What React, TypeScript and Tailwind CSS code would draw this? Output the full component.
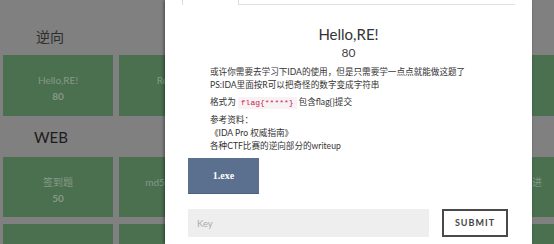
import React from "react";

const font = { fontFamily: 'Lato, "Noto Sans CJK SC", sans-serif' };

type Card = { title: string; score: string };

const row1: Card[] = [
  { title: "Hello,RE!", score: "80" },
  { title: "Reverse", score: "100" },
  { title: "逆向入门", score: "100" },
  { title: "CrackMe", score: "150" },
  { title: "加密", score: "200" },
];
const row2: Card[] = [
  { title: "签到题", score: "50" },
  { title: "md5 collision", score: "50" },
  { title: "GBK Injection", score: "150" },
  { title: "文件包含", score: "150" },
  { title: "步步前进", score: "100" },
];
const row3: Card[] = [
  { title: "", score: "" },
  { title: "", score: "" },
  { title: "", score: "" },
  { title: "", score: "" },
  { title: "", score: "" },
];

function CardRow({ cards, h }: { cards: Card[]; h: string }) {
  return (
    <div className="flex gap-[6px] pl-[3px]">
      {cards.map((c, i) => (
        <div
          key={i}
          className={`w-[110px] shrink-0 ${h} bg-[#4a7050] flex flex-col items-center pt-[17px] text-[10px] leading-[16px] text-[#879887]`}
        >
          <div className="whitespace-nowrap">{c.title}</div>
          <div className="font-bold">{c.score}</div>
        </div>
      ))}
    </div>
  );
}

export default function App() {
  return (
    <div
      className="relative w-[554px] h-[244px] overflow-hidden bg-[#808080]"
      style={font}
    >
      {/* background page */}
      <div className="flex flex-col pt-[27px]">
        <div className="pl-[36px] text-[14px] leading-[20px] text-[#2e2e2e]">逆向</div>
        <div className="mt-[8px]">
          <CardRow cards={row1} h="h-[61px]" />
        </div>
        <div className="mt-[11px] pl-[34px] text-[15px] leading-[20px] text-[#1c1c1c]">WEB</div>
        <div className="mt-[10px] flex flex-col gap-[7px]">
          <CardRow cards={row2} h="h-[60px]" />
          <CardRow cards={row3} h="h-[60px]" />
        </div>
      </div>

      {/* modal */}
      <div className="absolute left-[165px] top-0 w-[367px] h-[244px] bg-white shadow-[-1px_0_3px_rgba(0,0,0,0.45)] px-[17px] flex flex-col text-[#333]">
        <div className="flex h-[5px] shrink-0">
          <div className="w-[57px] h-full border-x border-[#dddddd] bg-white" />
          <div className="flex-1 border-b border-[#e2e2e2]" />
        </div>
        <div className="mt-[20px] text-center text-[15px] leading-[18px] text-[#333]">
          Hello,RE!
        </div>
        <div className="mt-[2px] text-center text-[12px] leading-[16px] text-[#444]">
          80
        </div>
        <div className="pl-[28px] text-[8.6px] leading-[13px] text-[#333]">
          <div className="mt-[5px]">
            <div>或许你需要去学习下IDA的使用，但是只需要学一点点就能做这题了</div>
            <div>PS:IDA里面按R可以把奇怪的数字变成字符串</div>
          </div>
          <div className="mt-[4px] flex items-center">
            <span>格式为</span>
            <code
              className="mx-[2px] px-[3px] bg-[#f9f2f4] text-[#c7254e] text-[8px] leading-[12px]"
              style={{ fontFamily: '"Liberation Mono", monospace' }}
            >
              flag{"{*****}"}
            </code>
            <span>包含flag{"{}"}提交</span>
          </div>
          <div className="mt-[5px]">
            <div>参考资料：</div>
            <div>《IDA Pro 权威指南》</div>
            <div>各种CTF比赛的逆向部分的writeup</div>
          </div>
        </div>
        <div className="pl-[6px] mt-[5px]">
          <div
            className="w-[71px] h-[36px] bg-[#5b6f8e] flex items-center justify-center text-white font-bold text-[10px] border-b border-[#4d6080]"
            style={{ fontFamily: '"Liberation Serif", serif' }}
          >
            1.exe
          </div>
        </div>
        <div className="pl-[6px] mt-[15px] flex gap-[13px]">
          <input
            className="w-[241px] h-[28px] bg-[#eeeeee] px-[9px] text-[9.5px] outline-none placeholder:text-[#ababab]"
            placeholder="Key"
            style={font}
          />
          <div className="w-[66px] h-[28px] border-2 border-[#4a4a4a] flex items-center justify-center text-[9px] font-bold tracking-[1px] text-[#444]">
            SUBMIT
          </div>
        </div>
      </div>
    </div>
  );
}
